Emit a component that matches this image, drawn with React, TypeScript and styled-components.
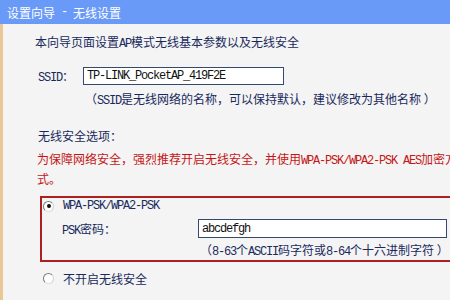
import React from "react";
import styled, { createGlobalStyle } from "styled-components";

const GlobalStyle = createGlobalStyle`
  html, body {
    margin: 0;
    padding: 0;
    background: #f4f4f4;
    overflow: hidden;
  }
  body {
    font-family: "Noto Sans CJK SC", "Noto Sans", sans-serif;
    font-size: 12px;
    color: #1a2a5c;
  }
`;

const Page = styled.div`
  width: 450px;
  height: 300px;
  display: flex;
  flex-direction: column;
  overflow: hidden;
`;

const TitleBar = styled.div`
  flex-shrink: 0;
  height: 24px;
  background: #6a9af8;
  color: #ffffff;
  display: flex;
  align-items: center;
  padding-left: 7px;
  font-size: 12px;
  white-space: pre;
`;

const Body = styled.div`
  flex: 1;
  width: 470px;
  border-left: 3px solid #ebc796;
  padding: 9px 0 0 32px;
  display: flex;
  flex-direction: column;
  align-items: flex-start;
`;

const Mono = styled.span`
  font-family: "Liberation Mono", "DejaVu Sans Mono", monospace;
  font-size: 12px;
  letter-spacing: -1.2px;
  white-space: pre;
`;

const Line = styled.div<{ $top: number; $indent?: number }>`
  margin-top: ${(p) => p.$top}px;
  padding-left: ${(p) => p.$indent ?? 0}px;
  line-height: 18px;
  white-space: nowrap;
`;

const FieldRow = styled.div<{ $top: number }>`
  margin-top: ${(p) => p.$top}px;
  display: flex;
  align-items: center;
`;

const FieldLabel = styled.span<{ $indent: number; $width: number }>`
  padding-left: ${(p) => p.$indent}px;
  width: ${(p) => p.$width}px;
  white-space: nowrap;
`;

const TextInput = styled.div<{ $w: number; $h: number }>`
  box-sizing: border-box;
  width: ${(p) => p.$w}px;
  height: ${(p) => p.$h}px;
  border: 1px solid #34496b;
  background: #ffffff;
  color: #111111;
  padding-left: 3px;
  display: flex;
  align-items: center;
  white-space: nowrap;
`;

const Warning = styled.div`
  margin-top: 5px;
  margin-left: 2px;
  width: 425px;
  line-height: 18px;
  color: #c41616;
`;

const SecurityBox = styled.div`
  margin-top: 8px;
  margin-left: 5px;
  width: 430px;
  border: 2px solid #ad2020;
  display: flex;
  flex-direction: column;
`;

const OptionRow = styled.div<{ $top: number; $indent: number }>`
  margin-top: ${(p) => p.$top}px;
  padding-left: ${(p) => p.$indent}px;
  height: 16px;
  display: flex;
  align-items: center;
  gap: 9px;
  white-space: nowrap;
`;

const Radio = styled.span<{ $checked?: boolean }>`
  box-sizing: border-box;
  width: 11px;
  height: 11px;
  border-radius: 50%;
  border: 1px solid;
  border-color: #7c7c7c #d0d0d0 #dcdcdc #7c7c7c;
  background: #ffffff;
  display: flex;
  align-items: center;
  justify-content: center;
  flex-shrink: 0;
  &::after {
    content: "";
    width: 4px;
    height: 4px;
    border-radius: 50%;
    background: ${(p) => (p.$checked ? "#111111" : "transparent")};
  }
`;

const Note = styled.div<{ $top: number; $indent: number; $lh: number }>`
  margin-top: ${(p) => p.$top}px;
  padding-left: ${(p) => p.$indent}px;
  line-height: ${(p) => p.$lh}px;
  white-space: nowrap;
`;

export default function App() {
  return (
    <>
      <GlobalStyle />
      <Page>
        <TitleBar>
          设置向导<Mono> - </Mono>无线设置
        </TitleBar>
        <Body>
          <Line $top={0}>
            本向导页面设置<Mono>AP</Mono>模式无线基本参数以及无线安全
          </Line>
          <FieldRow $top={14}>
            <FieldLabel $indent={3} $width={45}>
              <Mono>SSID</Mono>：
            </FieldLabel>
            <TextInput $w={201} $h={18}>
              <Mono>TP-LINK_PocketAP_419F2E</Mono>
            </TextInput>
          </FieldRow>
          <Note $top={5} $indent={50} $lh={18}>
            （<Mono>SSID</Mono>是无线网络的名称，可以保持默认，建议修改为其他名称 ）
          </Note>
          <Line $top={17} $indent={3}>
            无线安全选项：
          </Line>
          <Warning>
            为保障网络安全，强烈推荐开启无线安全，并使用<Mono>WPA-PSK/WPA2-PSK AES</Mono>加密方式。
          </Warning>
          <SecurityBox>
            <OptionRow $top={0} $indent={1}>
              <Radio $checked />
              <Mono>WPA-PSK/WPA2-PSK</Mono>
            </OptionRow>
            <FieldRow $top={5}>
              <FieldLabel $indent={20} $width={136}>
                <Mono>PSK</Mono>密码：
              </FieldLabel>
              <TextInput $w={249} $h={19}>
                <Mono>abcdefgh</Mono>
              </TextInput>
            </FieldRow>
            <Note $top={4} $indent={158} $lh={16}>
              （<Mono>8-63</Mono>个<Mono>ASCII</Mono>码字符或<Mono>8-64</Mono>个十六进制字符 ）
            </Note>
          </SecurityBox>
          <OptionRow $top={8} $indent={8}>
            <Radio />
            不开启无线安全
          </OptionRow>
        </Body>
      </Page>
    </>
  );
}
